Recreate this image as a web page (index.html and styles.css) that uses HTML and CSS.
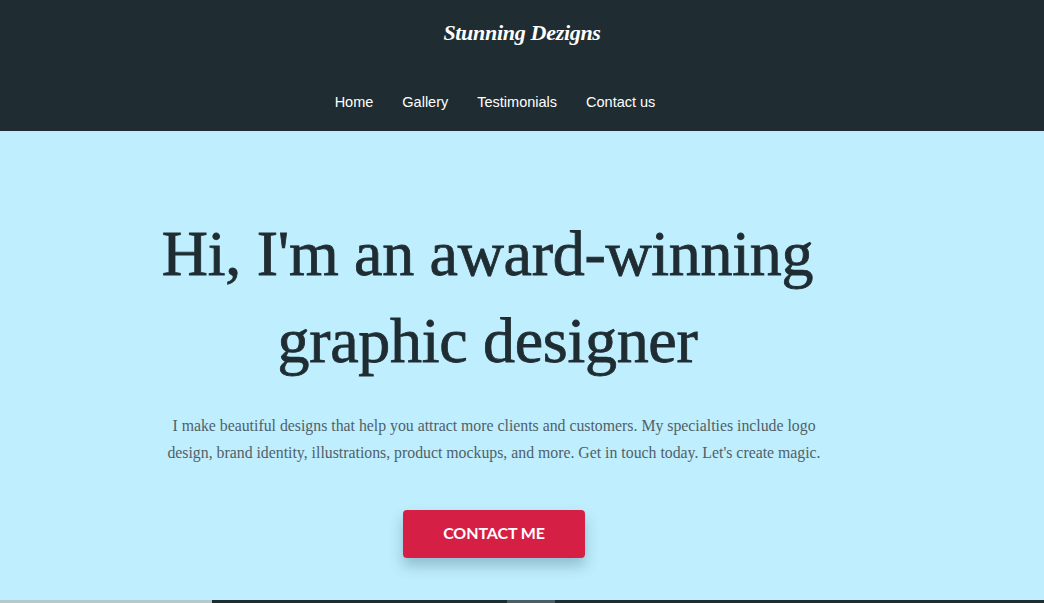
FILE: index.html
```html
<!doctype html>
<html lang="en">
<head>
    <meta charset="utf-8">
    <meta name="viewport" content="width=device-width, initial-scale=1.0">
    <title>Stunning Dezigns</title>
    <link rel="stylesheet" href="styles.css">
</head>
<body>
    <header class="site-header">
        <div class="brand">Stunning Dezigns</div>
        <nav class="nav">
            <a href="#">Home</a>
            <a href="#">Gallery</a>
            <a href="#">Testimonials</a>
            <a href="#">Contact us</a>
        </nav>
    </header>

    <section class="hero">
        <div class="hero-inner">
            <h1 class="hero-title">Hi, I'm an award-winning graphic designer</h1>
            <p class="hero-text">I make beautiful designs that help you attract more clients and customers. My specialties include logo design, brand identity, illustrations, product mockups, and more. Get in touch today. Let's create magic.</p>
            <a href="#" class="btn">CONTACT ME</a>
        </div>
    </section>

    <section class="gallery">
        <div class="tile tile-light"></div>
        <div class="tile tile-dark"></div>
        <div class="tile tile-mid"></div>
        <div class="tile tile-dark tile-wide"></div>
    </section>
</body>
</html>
```

FILE: styles.css
```css
body {
    margin: 0;
    font-family: "Liberation Serif", serif;
    background-color: #bfeefe;
}
.site-header {
    background-color: #1f2d33;
    height: 131px;
    display: flex;
    flex-direction: column;
    align-items: center;
}
.brand {
    margin-top: 17px;
    color: #fff;
    font-style: italic;
    font-weight: bold;
    font-size: 22px;
    line-height: 32px;
    letter-spacing: -0.3px;
}
.nav {
    margin-top: 43px;
    padding-right: 54px;
    display: flex;
    gap: 29px;
}
.nav a {
    font-family: "Liberation Sans", Arial, sans-serif;
    font-size: 14.5px;
    color: #fff;
    text-decoration: none;
    line-height: 20px;
}
.hero {
    height: 469px;
    display: flex;
    justify-content: center;
    padding-right: 56px;
}
.hero-inner {
    width: 700px;
    display: flex;
    flex-direction: column;
    align-items: center;
    text-align: center;
}
.hero-title {
    margin: 79px 0 0;
    padding-right: 13px;
    color: #1f2d33;
    font-weight: normal;
    font-size: 64px;
    line-height: 87px;
    letter-spacing: -0.3px;
    -webkit-text-stroke: 0.8px #1f2d33;
}
.hero-text {
    margin: 28px 0 0;
    width: 680px;
    color: #4f6168;
    font-size: 15.8px;
    line-height: 27px;
}
.btn {
    margin-top: 44px;
    width: 182px;
    height: 48px;
    padding-bottom: 3px;
    box-sizing: border-box;
    display: flex;
    align-items: center;
    justify-content: center;
    background-color: #d61f45;
    color: #fff;
    border-radius: 4px;
    box-shadow: 0 8px 14px rgba(40, 80, 100, 0.3);
    text-decoration: none;
    font-family: Lato, "Liberation Sans", sans-serif;
    font-weight: bold;
    font-size: 16px;
    letter-spacing: -0.1px;
}
.gallery {
    display: flex;
    height: 3px;
}
.tile { height: 3px; }
.tile-light { width: 212px; background-color: #b6c8cc; }
.tile-dark { width: 295px; background-color: #1f2d33; }
.tile-mid { width: 48px; background-color: #4e5d63; }
.tile-wide { flex: 1; }
```
